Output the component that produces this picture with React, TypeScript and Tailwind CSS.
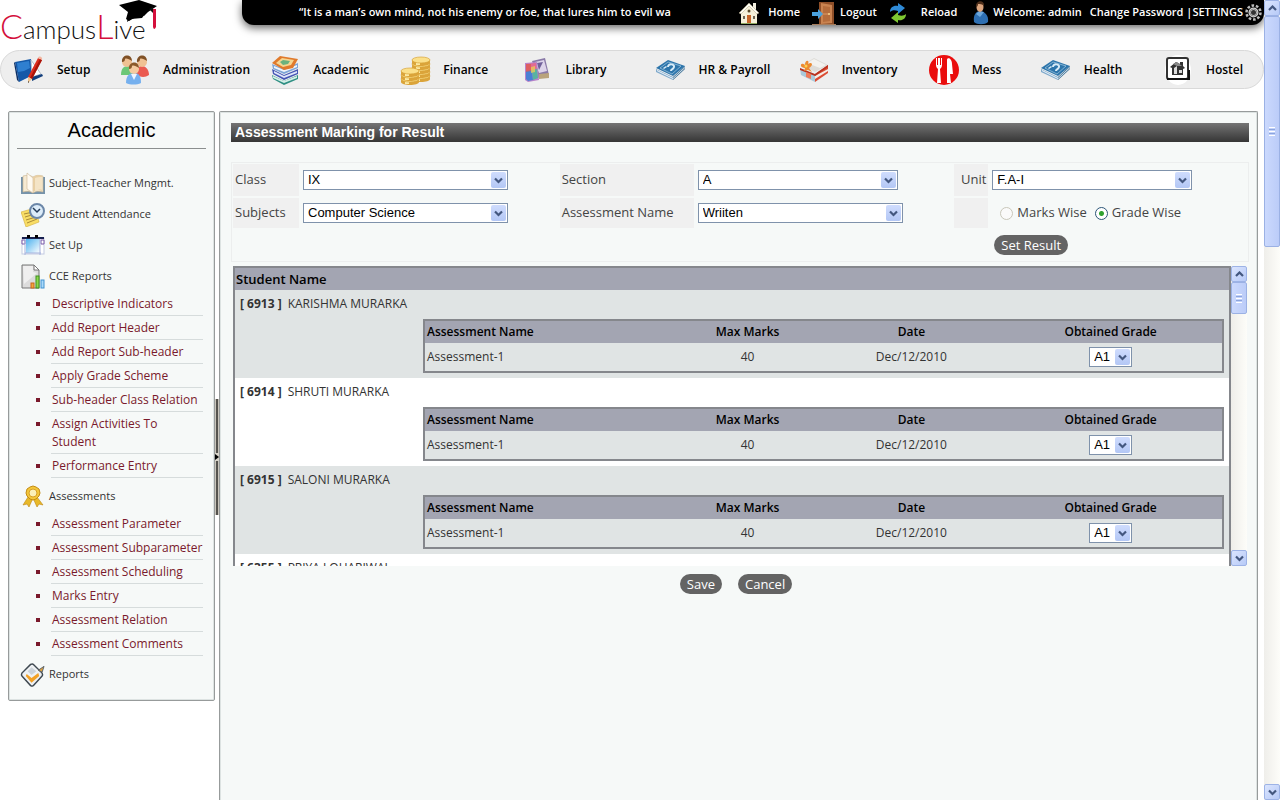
import React, { useState } from 'react';

interface NavItem {
  label: string;
  icon: React.ReactNode;
}

interface MenuGroup {
  label: string;
  icon: React.ReactNode;
  items?: string[];
}

interface Student {
  id: string;
  name: string;
}

const SetupIcon = () => (
  <svg width="30" height="30" viewBox="0 0 30 30">
    <path d="M1 7l16-3 2 16-14 7z" fill="#1458a8" />
    <path d="M1 7l4 20-2-2L0 8z" fill="#0b2f66" />
    <path d="M3 8l12-2 1 7-6 3-6 1z" fill="#2f7fd0" />
    <path d="M17 5l10 14-9 3z" fill="#fff" stroke="#b5bcc8" />
    <path d="M18 22l10-3 1 2-11 5z" fill="#123e7c" />
    <path d="M24 3l4 2-10 19-4-2z" fill="#dd2b1c" />
    <path d="M26 4l2 1-10 19-2-1z" fill="#a81409" />
    <path d="M24 3c1-3 5-1 4 2z" fill="#f3b7a0" />
    <path d="M14 22l4 2-4 4z" fill="#eec48e" />
    <path d="M14 26l1 1-1 1z" fill="#222" />
  </svg>
);

const PeopleIcon = () => (
  <svg width="30" height="30" viewBox="0 0 30 30">
    <path d="M1 20c0-7 3-9 7-9s6 3 6 9z" fill="#6cc777" />
    <path d="M16 20c0-7 3-9 6-9s7 3 7 9c-4 3-9 2-13 0z" fill="#ea5a50" />
    <circle cx="7" cy="7" r="5" fill="#f0c193" />
    <circle cx="22" cy="7" r="5" fill="#f0c193" />
    <path d="M2 7c-1-8 10-9 10-1-3-2-6-3-7-2 0 2-1 3-3 3zM17 7c-1-8 10-9 10-1-3-2-6-3-7-2 0 2-1 3-3 3z" fill="#805126" />
    <path d="M6 28c0-7 3-10 8-10s7 3 7 10c-4 2-11 2-15 0z" fill="#76b0ee" />
    <path d="M11 19h6l-3 6z" fill="#eef5ff" />
    <circle cx="14" cy="14" r="5" fill="#f5cba0" />
    <path d="M9 14c-1-8 10-9 10-1-3-2-6-3-7-2 0 2-1 3-3 3z" fill="#8b5a2a" />
  </svg>
);

const BooksIcon = () => (
  <svg width="28" height="30" viewBox="0 0 28 30">
    <path d="M1 20l12 6 14-6v4l-14 6L2 24z" fill="#2f8f83" />
    <path d="M2 21l11 5 13-5v2l-13 5-11-5z" fill="#d4efe8" />
    <path d="M1 14l12 6 14-6v5l-14 6L2 19z" fill="#4456b4" />
    <path d="M3 16l10 5 13-5v2l-13 5-10-5z" fill="#dfe5fa" />
    <path d="M1 9l12 5 14-6v5l-14 6L2 14z" fill="#7da5d8" />
    <path d="M3 11l10 4 13-5v2l-13 5-10-4z" fill="#f1f5fb" />
    <path d="M1 8L9 1l18 3-5 9-9 2z" fill="#e07a2c" />
    <path d="M5 8l6-5 12 2-3 5-8 2z" fill="#f5d590" />
    <path d="M9 7l3-2 7 1-2 3-5 1z" fill="#6ab27d" />
  </svg>
);

const Coin = ({ x, y }: { x: number; y: number }) => (
  <g>
    <path d={`M${x - 9} ${y}v3c0 4 18 4 18 0v-3z`} fill="#dba43a" />
    <path d={`M${x - 5} ${y + 2}v3h4v-3z`} fill="#fbe9a3" />
    <ellipse cx={x} cy={y} rx="9" ry="3" fill="#fbe08a" stroke="#d9a43a" strokeWidth=".7" />
  </g>
);

const CoinsIcon = () => (
  <svg width="31" height="30" viewBox="0 0 31 30">
    {[21, 17, 13, 9, 5].map((y) => <Coin key={y} x={21} y={y} />)}
    {[24, 20, 16].map((y) => <Coin key={y} x={10} y={y} />)}
  </svg>
);

const LibraryIcon = () => (
  <svg width="28" height="28" viewBox="0 0 28 28">
    <path d="M9 5l13-3 4 17-11 3z" fill="#8a7aa8" />
    <path d="M12 6l9-2 3 11-8 2z" fill="#ddd4ea" />
    <path d="M14 7l6-1-4 8z" fill="#70609a" />
    <path d="M16 18l10-1v5l-10 1z" fill="#b9a37c" />
    <path d="M2 7l12-1 2 18-11 2-3-2z" fill="#b982c9" />
    <path d="M3 8l10-1 1 8-11 1z" fill="#e36b93" />
    <path d="M3 15l6-1 1 10-5 1-2-2z" fill="#4a7fd4" />
    <path d="M9 14l5-1 1 9-5 2z" fill="#58b3a0" />
    <path d="M3 8l5 0v7l-5 1z" fill="#dc5a4c" opacity=".7" />
    <path d="M8 11l4-1v6l-4 1z" fill="#eacb57" opacity=".8" />
  </svg>
);

const MoneyIcon = () => (
  <svg width="30" height="22" viewBox="0 0 30 22">
    <path d="M0 10v3l17 8v-3z" fill="#7fa9cb" />
    <path d="M17 18L29 7v3L17 21z" fill="#33688f" />
    <path d="M1 11l16 8L29 8v1L17 20 1 12z" fill="#eef5fa" />
    <path d="M0 9l12-8 17 6-12 10z" fill="#2d75ab" />
    <path d="M4 9l8-6 13 4-9 8z" fill="none" stroke="#b9d8ed" strokeWidth=".6" />
    <path d="M12 8c0-4 7-3 6 0s-3 2-3 4" fill="none" stroke="#d8ebf7" strokeWidth="2" />
    <path d="M7 9l3-2 1 1-3 2z" fill="#d8ebf7" />
  </svg>
);

const BoxIcon = () => (
  <svg width="30" height="28" viewBox="0 0 30 28">
    <path d="M3 9L15 2l14 7-13 7z" fill="#dedcd8" />
    <path d="M8 7l7-4 12 6-6 3z" fill="#f3f2ef" />
    <path d="M1 12l15 7v7L2 19z" fill="#aac9da" />
    <path d="M29 9v8l-13 9v-8z" fill="#db4b32" />
    <path d="M16 20l13-7v2l-13 8z" fill="#f4ece6" />
    <path d="M1 12l15 6 13-9v2l-13 9-15-6z" fill="#b9321f" />
    <path d="M7 16l5 2v5l-5-2z" fill="#ef7b59" />
    <path d="M6 12c-6 0-5-7 0-3 0-6 5-5 3-1 4-3 6 1 1 4l3 4-4-2-4 1z" fill="#ed8a30" />
    <circle cx="7" cy="10" r="1.500" fill="#fbd14e" />
  </svg>
);

const MessIcon = () => (
  <svg width="30" height="30" viewBox="0 0 30 30">
    <circle cx="15" cy="15" r="15" fill="#ea0d0d" />
    <path d="M7 3h1v7h1V3h2v7h1V3h1v7c0 2-1 3-2 4l1 14H8L9 14c-1-1-2-2-2-4z" fill="#fff" />
    <path d="M18 5c0-3 5-2 5 4l1 10h-3l1 9h-4z" fill="#fff" />
  </svg>
);

const HostelIcon = () => (
  <svg width="26" height="30" viewBox="0 0 26 30">
    <ellipse cx="13" cy="15" rx="13" ry="15" fill="#fff" />
    <rect x="2" y="3" width="21" height="21" rx="2" fill="#fff" stroke="#333" strokeWidth="2" />
    <path d="M2 24h22V15" fill="none" stroke="#111" strokeWidth="2" />
    <path d="M5 12l6-5 4 2V7h3v4l2 2-2 1v6H7v-7z" fill="#333" />
    <path d="M9 13l3-2v8H9zM14 15h3v3h-3z" fill="#ddd" />
    <path d="M8 9l4-2 5 4h-5z" fill="#8a8a8a" />
  </svg>
);

const HomeIcon = () => (
  <svg width="22" height="24" viewBox="0 0 22 24">
    <path d="M15 2h3v8h-3z" fill="#f3efe0" />
    <path d="M3 12l8-8 8 8v11H3z" fill="#f6f0d9" />
    <path d="M1 12L11 2l10 10-2 1-8-8-8 8z" fill="#fffef4" stroke="#b2a586" strokeWidth=".5" />
    <circle cx="11" cy="10" r="1.5" fill="#594a2c" />
    <path d="M9 14h4v9H9z" fill="#c7662a" />
    <path d="M5 15h2v3H5zM15 15h2v3h-2z" fill="#6f6655" />
    <path d="M3 22h16v1H3z" fill="#8fa75f" />
  </svg>
);

const LogoutIcon = () => (
  <svg width="24" height="24" viewBox="0 0 24 24">
    <path d="M7 1h15v22H7z" fill="#8f4f28" />
    <path d="M9 2l11 2v18L9 23z" fill="#c98350" />
    <path d="M11 5l7 1v6l-7 0zM11 14h7v6l-7 1z" fill="#b56d3c" />
    <circle cx="17" cy="13" r="1" fill="#f4d28b" />
    <path d="M0 11h6V8l5 5-5 5v-3H0z" fill="#4aa1dd" />
    <path d="M0 23h24v1H0z" fill="#a67c5b" />
  </svg>
);

const ReloadIcon = () => (
  <svg width="18" height="20" viewBox="0 0 18 20">
    <path d="M1 9c0-5 4-7 8-6V0l7 5-7 6V8C6 7 3 7 1 9z" fill="#2f8ad6" />
    <path d="M17 11c0 5-4 7-8 6v3l-7-5 7-6v3c3 1 6 1 8-1z" fill="#7fc832" />
  </svg>
);

const UserIcon = () => (
  <svg width="16" height="24" viewBox="0 0 16 24">
    <path d="M1 21c-1-7 2-11 6-11s9 4 8 11c-3 3-11 3-14 0z" fill="#2e6fb2" />
    <path d="M3 13c2-3 5-3 8-2l-4 5z" fill="#6ba7dc" />
    <ellipse cx="7" cy="6" rx="3.5" ry="5" fill="#dba57e" />
    <path d="M3 6c-1-7 9-8 8-1-2-2-4-2-6-2 0 2-1 3-2 3z" fill="#4e2f1b" />
  </svg>
);

const GearIcon = () => (
  <svg width="17" height="17" viewBox="0 0 17 17">
    <circle cx="8.500" cy="8.500" r="7" fill="none" stroke="#bdbdbd" strokeWidth="2.500" strokeDasharray="2.600 1.800" />
    <circle cx="8.500" cy="8.500" r="5" fill="#d2d2d2" />
    <circle cx="8.500" cy="8.500" r="2.500" fill="#333" />
    <circle cx="8.500" cy="8.500" r="3.500" fill="none" stroke="#8b8b8b" />
  </svg>
);

const OpenBookIcon = () => (
  <svg width="24" height="24" viewBox="0 0 24 24">
    <path d="M0 5h24v17H0z" fill="#7693aa" />
    <path d="M2 4c4-1 7-1 10 1 3-2 6-2 10-1v16c-4-1-7-1-10 1-3-2-6-2-10-1z" fill="#f6ead2" stroke="#c6b18e" strokeWidth=".6" />
    <path d="M6 1l6 5v15l-6-4z" fill="#fffaf0" stroke="#cdb793" strokeWidth=".6" />
    <path d="M12 5c3-2 6-2 9-1v15c-3-1-6-1-9 1z" fill="#e8cfa4" />
    <path d="M14 6c2-1 4-1 7-1v13c-2-1-4 0-7 1z" fill="#f4e4c6" />
  </svg>
);

const AttendanceIcon = () => (
  <svg width="24" height="24" viewBox="0 0 24 24">
    <path d="M0 9l14-4 4 14-13 5z" fill="#f8dd65" stroke="#d3ae3d" strokeWidth=".6" />
    <path d="M3 11l9-2M4 14l10-3M5 17l10-3M6 20l10-4" stroke="#a98a37" />
    <circle cx="16" cy="8" r="7" fill="#dcecf9" stroke="#6b87a8" strokeWidth="2" />
    <path d="M12 5l4 4 3-3" fill="none" stroke="#243b58" strokeWidth="1.500" />
  </svg>
);

const CalendarIcon = () => (
  <svg width="24" height="22" viewBox="0 0 24 22">
    <defs>
      <linearGradient id="sky" x1="0" y1="0" x2="1" y2="1">
        <stop offset="0" stopColor="#4db1ee" />
        <stop offset="1" stopColor="#fff" />
      </linearGradient>
    </defs>
    <rect x="1" y="3" width="22" height="16" fill="#fff" stroke="#c3cbe2" />
    <path d="M1 2h22v2H1z" fill="#16204f" />
    <path d="M6 0h3v3H6zM14 0h3v3h-3z" fill="#000" />
    <path d="M1 5h3v4H1zM20 5h3v4h-3z" fill="#fff" stroke="#7a58a9" />
    <path d="M5 4h14v14H5z" fill="url(#sky)" />
    <path d="M4 4v16M19 4v16M4 18h16" stroke="#a5b2dc" />
  </svg>
);

const ReportIcon = () => (
  <svg width="24" height="26" viewBox="0 0 24 26">
    <path d="M1 1h12l5 5v18H1z" fill="#dcdcdc" stroke="#777" />
    <path d="M13 1v5h5z" fill="#fff" stroke="#777" />
    <path d="M2 2h10v6l4 1L3 20z" fill="#efefef" />
    <rect x="10" y="19" width="3" height="5" fill="#f2a73b" stroke="#c9651c" />
    <rect x="15" y="12" width="3" height="12" fill="#8dd94a" stroke="#3d8f1d" />
    <rect x="20" y="16" width="3" height="8" fill="#a9d9fa" stroke="#4092cf" />
  </svg>
);

const MedalIcon = () => (
  <svg width="22" height="24" viewBox="0 0 22 24">
    <path d="M6 12L1 20l4-1 2 3 4-9zM15 12l6 8-4-1-2 3-4-9z" fill="#e8b929" stroke="#bd8410" strokeWidth=".6" />
    <path d="M11 1l3 1 3 2 1 4-1 3-3 3-3 1-3-1-3-3-1-3 1-4 3-2z" fill="#f3c73b" stroke="#c48c13" />
    <circle cx="11" cy="8" r="4" fill="#fbf0b8" stroke="#d8a024" />
  </svg>
);

const CheckIcon = () => (
  <svg width="26" height="26" viewBox="0 0 26 26">
    <path d="M11 2q2-1 3 0l9 9q1 2 0 3l-9 10q-1 1-3 0L2 14q-1-1 0-3z" fill="#eef1f3" stroke="#3e4850" strokeWidth="1.500" />
    <path d="M8 9l4-4 5 4-5 4z" fill="#ccd3d9" />
    <path d="M7 12l5 4 7-5 1 3-8 7-6-7z" fill="#f3a125" />
    <path d="M19 8l6-4-2 6z" fill="#e0a23a" stroke="#59636b" />
  </svg>
);

const Logo = () => (
  <svg width="160" height="50" viewBox="0 0 160 50" className="block">
    <text x="0" y="39" fontFamily="Lato" fontWeight="300" fontSize="26" fill="#111">
      <tspan fill="#d40f3c" fontSize="34">C</tspan>ampus<tspan fill="#d40f3c" fontSize="34">L</tspan>ive
    </text>
    <path d="M119 5l20-5 18 6-9 6-4 4-3-2-12 7-3-2 2-7z" fill="#000" />
    <path d="M129 11l16 3-3 4-11 1-4 3z" fill="#000" />
    <path d="M149 9l4-2v6z" fill="#111" />
    <path d="M153 9h3v18q-2 4-3 0z" fill="#d40f3c" />
  </svg>
);

const navItems: NavItem[] = [
  { label: 'Setup', icon: <SetupIcon /> },
  { label: 'Administration', icon: <PeopleIcon /> },
  { label: 'Academic', icon: <BooksIcon /> },
  { label: 'Finance', icon: <CoinsIcon /> },
  { label: 'Library', icon: <LibraryIcon /> },
  { label: 'HR & Payroll', icon: <MoneyIcon /> },
  { label: 'Inventory', icon: <BoxIcon /> },
  { label: 'Mess', icon: <MessIcon /> },
  { label: 'Health', icon: <MoneyIcon /> },
  { label: 'Hostel', icon: <HostelIcon /> },
];

const menuGroups: MenuGroup[] = [
  { label: 'Subject-Teacher Mngmt.', icon: <OpenBookIcon /> },
  { label: 'Student Attendance', icon: <AttendanceIcon /> },
  { label: 'Set Up', icon: <CalendarIcon /> },
  {
    label: 'CCE Reports',
    icon: <ReportIcon />,
    items: [
      'Descriptive Indicators',
      'Add Report Header',
      'Add Report Sub-header',
      'Apply Grade Scheme',
      'Sub-header Class Relation',
      'Assign Activities To Student',
      'Performance Entry',
    ],
  },
  {
    label: 'Assessments',
    icon: <MedalIcon />,
    items: [
      'Assessment Parameter',
      'Assessment Subparameter',
      'Assessment Scheduling',
      'Marks Entry',
      'Assessment Relation',
      'Assessment Comments',
    ],
  },
  { label: 'Reports', icon: <CheckIcon /> },
];

const students: Student[] = [
  { id: '6913', name: 'KARISHMA MURARKA' },
  { id: '6914', name: 'SHRUTI MURARKA' },
  { id: '6915', name: 'SALONI MURARKA' },
  { id: '6355', name: 'PRIYA LOHARIWAL' },
];

const Chevron = ({ up = false }: { up?: boolean }) => (
  <svg width="9" height="7" viewBox="0 0 9 7">
    <path d={up ? 'M1 5l3.500-3.500L8 5' : 'M1 1.500L4.500 5 8 1.500'} fill="none" stroke="#43577f" strokeWidth="2.200" />
  </svg>
);

interface SelectBoxProps {
  id: string;
  options: string[];
  width: string;
  ariaLabel?: string;
}

const SelectBox = ({ id, options, width, ariaLabel }: SelectBoxProps) => (
  <div className={`relative h-5 ${width}`}>
    <select
      id={id}
      aria-label={ariaLabel}
      className="block h-5 w-full appearance-none border border-[#7f92ab] bg-white pl-1 pr-4 font-['Liberation_Sans',sans-serif] text-[13px] leading-[18px] text-black"
    >
      {options.map((o) => <option key={o}>{o}</option>)}
    </select>
    <span className="pointer-events-none absolute inset-y-0.5 right-0.5 flex w-[15px] items-center justify-center rounded-xs bg-linear-to-b from-[#cfdcfd] to-[#b3c7f5]">
      <Chevron />
    </span>
  </div>
);

const ScrollButton = ({ up = false }: { up?: boolean }) => (
  <button
    type="button"
    aria-label={up ? 'Scroll up' : 'Scroll down'}
    className="flex h-4 w-full shrink-0 items-center justify-center rounded-xs border border-[#9db3e6] bg-linear-to-br from-[#dbe5fe] to-[#b7caf7]"
  >
    <Chevron up={up} />
  </button>
);

const ScrollBar = ({ thumb }: { thumb: string }) => (
  <div className="flex w-4 shrink-0 flex-col bg-linear-to-r from-[#efeeea] to-[#fdfdf9]">
    <ScrollButton up />
    <div className={`flex w-full shrink-0 flex-col items-center justify-center gap-px rounded-xs border border-[#9bb1e4] bg-linear-to-r from-[#cbd9fd] to-[#bbccf8] ${thumb}`}>
      <span className="h-px w-1.5 bg-white" />
      <span className="h-px w-1.5 bg-[#8ca5dd]" />
      <span className="h-px w-1.5 bg-white" />
      <span className="h-px w-1.5 bg-[#8ca5dd]" />
      <span className="h-px w-1.5 bg-white" />
    </div>
    <div className="flex-1" />
    <ScrollButton />
  </div>
);

const PillButton = ({ children }: { children: React.ReactNode }) => (
  <button type="button" className="h-5 rounded-full bg-[#646464] px-[7px] text-[13px] leading-5 text-white">
    {children}
  </button>
);

const TopBar = () => (
  <header className="flex h-[50px] items-start">
    <a href="#" aria-label="CampusLive" className="w-[242px] shrink-0">
      <Logo />
    </a>
    <div className="flex h-[25px] min-w-0 flex-1 items-center rounded-b-xl bg-black pr-0.5 text-[11px] font-semibold text-white shadow-[0_3px_8px_rgba(0,0,0,0.6)]">
      <p className="ml-[57px] whitespace-nowrap">
        “It is a man’s own mind, not his enemy or foe, that lures him to evil wa
      </p>
      <div className="flex flex-1 items-center justify-end whitespace-nowrap">
        <a href="#" className="mr-3 flex items-center gap-2"><HomeIcon />Home</a>
        <a href="#" className="mr-3 flex items-center gap-1"><LogoutIcon />Logout</a>
        <a href="#" className="mr-4 flex items-center gap-3.5"><ReloadIcon />Reload</a>
        <span className="mr-2 flex items-center gap-1"><UserIcon />Welcome: admin</span>
        <a href="#">Change Password&nbsp;</a>
        <a href="#" className="flex items-center gap-0.5">|SETTINGS <GearIcon /></a>
      </div>
    </div>
  </header>
);

const MainNav = () => (
  <nav className="grid h-[39px] grid-cols-[106fr_150fr_130fr_122fr_133fr_143fr_130fr_112fr_122fr_101fr] items-center rounded-full border border-[#d9d9d9] bg-[#eeeeee] pl-3">
    {navItems.map((item) => (
      <a key={item.label} href="#" className="flex items-center gap-3 whitespace-nowrap text-xs font-semibold text-black">
        <span className="flex w-8 justify-center">{item.icon}</span>
        {item.label}
      </a>
    ))}
  </nav>
);

const SideMenu = () => (
  <aside className="w-[207px] shrink-0 self-start rounded-xs border border-[#979b9b] bg-[#f6f9f8] px-px pb-2.5 pt-px shadow-[inset_0_0_0_1px_#dde3e2]">
    <h2 className="mx-[7px] h-9 border-b border-[#8b8f8f] text-center font-['Liberation_Sans',sans-serif] text-xl leading-[34px] text-black">
      Academic
    </h2>
    <ul className="mt-[19px] text-[11px] font-medium text-[#333]">
      {menuGroups.map((group) => (
        <li key={group.label}>
          <a href="#" className="flex h-[31px] items-center gap-1 pl-2.5">
            <span className="flex w-[25px] justify-center">{group.icon}</span>
            {group.label}
          </a>
          {group.items && (
            <ul className="mb-[3px] ml-[41px] mr-2.5 list-[square] text-xs font-normal text-[#7a1a2c]">
              {group.items.map((item) => (
                <li key={item} className="border-b border-[#d6dcdc] pb-0.5 pl-px pt-[3px] leading-[18px]">
                  <a href="#">{item}</a>
                </li>
              ))}
            </ul>
          )}
        </li>
      ))}
    </ul>
  </aside>
);

const Splitter = () => (
  <button
    type="button"
    aria-label="Toggle side menu"
    className="mt-[288px] flex h-[116px] w-1 shrink-0 items-center justify-center self-start border-x border-[#c9c5bb] bg-[#55534e]"
  >
    <svg width="4" height="8" viewBox="0 0 4 8" className="shrink-0 bg-[#d8d4ca]">
      <path d="M0 1l4 3-4 3z" fill="#000" />
    </svg>
  </button>
);

const labelCell = 'flex items-center bg-[#f0f0f0] px-0.5';
const fieldCell = 'flex items-center px-0.5';

const FilterForm = () => {
  const [mode, setMode] = useState('grade');

  return (
    <form className="mt-5 grid grid-cols-[66px_1fr_134px_1fr_34px_1fr] grid-rows-[32px_30px_30px] gap-x-0.5 gap-y-0.5 border border-[#eceeee] p-px text-[13px] text-[#444]">
      <label htmlFor="class" className={labelCell}>Class</label>
      <div className={fieldCell}><SelectBox id="class" options={['IX', 'X']} width="w-[205px]" /></div>
      <label htmlFor="section" className={labelCell}>Section</label>
      <div className={fieldCell}><SelectBox id="section" options={['A', 'B']} width="w-[200px]" /></div>
      <label htmlFor="unit" className="flex items-center justify-end bg-[#f0f0f0] px-0.5">Unit</label>
      <div className={fieldCell}><SelectBox id="unit" options={['F.A-I', 'F.A-II']} width="w-[200px]" /></div>

      <label htmlFor="subjects" className={labelCell}>Subjects</label>
      <div className={fieldCell}><SelectBox id="subjects" options={['Computer Science', 'Mathematics']} width="w-[205px]" /></div>
      <label htmlFor="assessment" className={labelCell}>Assessment Name</label>
      <div className={fieldCell}><SelectBox id="assessment" options={['Wriiten', 'Oral']} width="w-[205px]" /></div>
      <span className="bg-[#f0f0f0]" />
      <div className="flex items-center gap-2 pl-2.5">
        <label className="flex items-center gap-1">
          <input
            type="radio"
            name="mode"
            disabled
            checked={mode === 'marks'}
            onChange={() => setMode('marks')}
            className="size-[13px] appearance-none rounded-full border border-[#c9c7ba] bg-[#fafafa]"
          />
          Marks Wise
        </label>
        <label className="flex items-center gap-1">
          <input
            type="radio"
            name="mode"
            checked={mode === 'grade'}
            onChange={() => setMode('grade')}
            className="size-[13px] appearance-none rounded-full border border-[#2b5577] bg-white bg-[radial-gradient(circle,#2fa12f_2px,transparent_3px)]"
          />
          Grade Wise
        </label>
      </div>

      <div className="col-start-6 flex items-center pl-1"><PillButton>Set Result</PillButton></div>
    </form>
  );
};

const MarksTable = ({ student }: { student: Student }) => (
  <table className="w-full table-fixed border-2 border-[#85878c] bg-[#e0e4e4]">
    <thead>
      <tr className="h-[23px] bg-[#a3a5b2] text-xs text-black">
        <th className="w-[31%] pl-0.5 text-left font-semibold">Assessment Name</th>
        <th className="w-[19%] font-semibold">Max Marks</th>
        <th className="w-[22%] font-semibold">Date</th>
        <th className="w-[28%] font-semibold">Obtained Grade</th>
      </tr>
    </thead>
    <tbody>
      <tr className="h-[29px] text-center text-xs">
        <td className="pl-0.5 text-left">Assessment-1</td>
        <td>40</td>
        <td>Dec/12/2010</td>
        <td>
          <div className="flex justify-center">
            <SelectBox id={`grade-${student.id}`} ariaLabel={`Grade ${student.id}`} options={['A1', 'A2', 'B1']} width="w-[43px]" />
          </div>
        </td>
      </tr>
    </tbody>
  </table>
);

const StudentList = () => (
  <div className="mx-0.5 mt-1 flex h-[300px]">
    <div className="min-w-0 flex-1 overflow-hidden">
      <table className="w-full border-2 border-[#85878c] text-[#333]">
        <thead>
          <tr className="h-[23px] bg-[#a3a5b2]">
            <th className="pl-px text-left text-[13px] font-semibold leading-5 text-black">Student Name</th>
          </tr>
        </thead>
        <tbody>
          {students.map((s) => (
            <tr key={s.id} className="bg-white odd:bg-[#e0e4e4]">
              <td className="px-[5px] pb-[5px] pt-1 text-xs">
                <p className="flex h-5 gap-1.5 leading-5"><b>[ {s.id} ]</b> {s.name}</p>
                <div className="ml-[183px] mt-[5px]"><MarksTable student={s} /></div>
              </td>
            </tr>
          ))}
        </tbody>
      </table>
    </div>
    <ScrollBar thumb="h-8" />
  </div>
);

function App() {
  return (
    <div className="flex h-screen overflow-hidden bg-white font-['Open_Sans',sans-serif]">
      <div className="flex min-w-0 flex-1 flex-col">
        <TopBar />
        <MainNav />
        <div className="mt-[22px] flex min-h-0 flex-1 pl-2 pr-1.5">
          <SideMenu />
          <Splitter />
          <main className="-mb-0.5 min-w-0 flex-1 rounded-t-xs border-x border-t border-[#979b9b] bg-[#f6f9f8] pl-[11px] pr-2 pt-[11px] shadow-[inset_0_0_0_1px_#dde3e2]">
            <h1 className="h-[19px] bg-linear-to-b from-[#757575] to-[#363636] pl-1 font-['Liberation_Sans',sans-serif] text-sm font-bold leading-[19px] text-white">
              Assessment Marking for Result
            </h1>
            <FilterForm />
            <StudentList />
            <div className="mt-2 flex justify-center gap-4 pr-2">
              <PillButton>Save</PillButton>
              <PillButton>Cancel</PillButton>
            </div>
          </main>
        </div>
      </div>
      <ScrollBar thumb="h-[231px]" />
    </div>
  );
}

export default App;
